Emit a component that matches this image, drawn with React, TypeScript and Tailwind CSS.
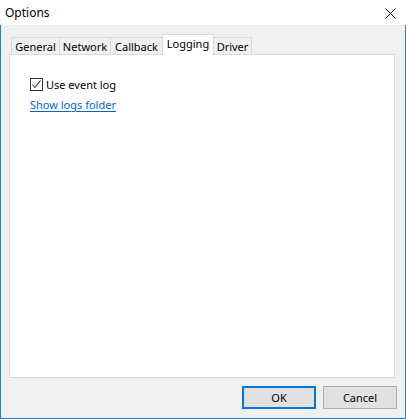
import React from 'react';

const tabs = [
    { label: 'General', w: 'w-[49px]' },
    { label: 'Network', w: 'w-[52px]' },
    { label: 'Callback', w: 'w-[53px]' },
    { label: 'Logging', w: 'w-[52px]', active: true },
    { label: 'Driver', w: 'w-[39px]' },
];

function App() {
    return (
        <div className="w-[406px] h-[419px] flex flex-col bg-white text-[11px] leading-[15px] text-black" style={{ fontFamily: '"Noto Sans", "Liberation Sans", sans-serif' }}>
            {/* title bar */}
            <div className="h-[25px] flex items-center justify-between pl-[5px] pr-[10px] bg-white">
                <span className="text-[12px]">Options</span>
                <svg width="11" height="11" viewBox="0 0 11 11" className="mt-[1px]">
                    <path d="M0.5 0.5 L10.5 10.5 M10.5 0.5 L0.5 10.5" stroke="#000" strokeWidth="1" />
                </svg>
            </div>

            {/* client area */}
            <div className="flex-1 flex flex-col bg-[#f0f0f0] border-x border-b border-[#1883d7] pl-[8px] pr-[10px] pt-[9px]">
                {/* tabs */}
                <div className="flex items-end pl-[2px] h-[21px]">
                    {tabs.map((t) =>
                        t.active ? (
                            <div
                                key={t.label}
                                className={`${t.w} h-[21px] -ml-px relative z-10 bg-white border-x border-t border-[#d9d9d9] flex items-start justify-center pt-[1px]`}
                            >
                                {t.label}
                            </div>
                        ) : (
                            <div
                                key={t.label}
                                className={`${t.w} h-[18px] -ml-px first:ml-0 bg-[#f0f0f0] border-x border-t border-[#d9d9d9] flex items-center justify-center`}
                            >
                                {t.label}
                            </div>
                        )
                    )}
                </div>

                {/* panel */}
                <div className="flex-1 -mt-px bg-white border border-[#d9d9d9] pl-[20px] pt-[23px] flex flex-col">
                    <label className="flex items-center h-[13px]">
                        <span className="w-[13px] h-[13px] border border-[#333] bg-white flex items-center justify-center">
                            <svg width="11" height="11" viewBox="0 0 11 11">
                                <path d="M1.5 5.5 L4 8.5 L9.5 1.5" fill="none" stroke="#333" strokeWidth="1.1" />
                            </svg>
                        </span>
                        <span className="ml-[3px]">Use event log</span>
                    </label>
                    <a href="#" className="mt-[6px] text-[#0066cc] underline underline-offset-2 self-start">
                        Show logs folder
                    </a>
                </div>

                {/* buttons */}
                <div className="flex justify-end gap-[7px] mt-[8px] mb-[9px]">
                    <button className="w-[74px] h-[23px] bg-[#e1e1e1] border-2 border-[#0078d7] flex items-center justify-center">
                        OK
                    </button>
                    <button className="w-[74px] h-[23px] bg-[#e1e1e1] border border-[#adadad] flex items-center justify-center -mr-[2px]">
                        Cancel
                    </button>
                </div>
            </div>
        </div>
    );
}

export default App;
